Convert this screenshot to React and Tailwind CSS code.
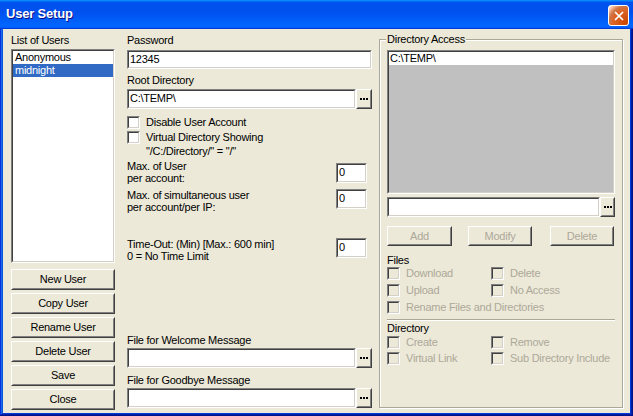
import React from 'react';
import { X } from 'lucide-react';

// Classic Win32 look: sunken field / raised button edges
const Sunken = ({ className = '', inner = 'bg-white', children }) => (
  <div className={`border border-t-[#808080] border-l-[#808080] border-r-white border-b-white ${className}`}>
    <div className={`w-full h-full overflow-hidden border border-t-[#404040] border-l-[#404040] border-r-[#D4D0C8] border-b-[#D4D0C8] ${inner}`}>
      {children}
    </div>
  </div>
);

const Raised = ({ className = '', disabled, children }) => (
  <div className={`border border-t-white border-l-white border-r-[#404040] border-b-[#404040] bg-[#ECE9D8] ${className}`}>
    <div
      className={`w-full h-full border border-t-[#ECE9D8] border-l-[#ECE9D8] border-r-[#808080] border-b-[#808080] flex items-center justify-center ${
        disabled ? 'text-[#ACA899]' : 'text-black'
      }`}
    >
      {children}
    </div>
  </div>
);

const Browse = ({ className = 'w-[16px]' }) => (
  <Raised className={`h-full shrink-0 ${className}`}>
    <div className="flex gap-[1px]">
      <span className="w-[2px] h-[2px] bg-black" />
      <span className="w-[2px] h-[2px] bg-black" />
      <span className="w-[2px] h-[2px] bg-black" />
    </div>
  </Raised>
);

const Field = ({ value = '', className = '' }) => (
  <Sunken className={className}>
    <div className="pl-[1px] leading-[14px] whitespace-nowrap">{value}</div>
  </Sunken>
);

const Check = ({ label, disabled }) => (
  <div className="flex items-center">
    <Sunken className="w-[13px] h-[13px] shrink-0" inner={disabled ? 'bg-[#ECE9D8]' : 'bg-white'} />
    <span className={`ml-[6px] leading-[13px] whitespace-nowrap ${disabled ? 'text-[#ACA899]' : ''}`}>{label}</span>
  </div>
);

const userButtons = ['New User', 'Copy User', 'Rename User', 'Delete User', 'Save', 'Close'];

export default function App() {
  return (
    <div className="w-[633px] h-[416px] flex flex-col bg-[#0855DD] shadow-[inset_-1px_-1px_#00138c,inset_1px_1px_#0831d9,inset_-2px_-2px_#001ea0,inset_2px_2px_#166aee,inset_-3px_-3px_#003bda,inset_3px_3px_#0855dd] font-['Liberation_Sans',Arial,sans-serif] text-[11px] tracking-[-0.25px] text-black">
      {/* Title bar */}
      <div className="h-[29px] shrink-0 flex items-start pl-[6px] pr-[4px] bg-[linear-gradient(180deg,#0997ff,#0053ee_8%,#0050ee_40%,#06f_88%,#06f_93%,#005bff_95%,#003dd7_96%,#003dd7)]">
        <span className="mt-[5px] leading-[17px] text-[13px] font-bold tracking-[-0.2px] text-white font-['Liberation_Sans_Narrow','Liberation_Sans',Arial,sans-serif] [text-shadow:1px_1px_#0F1089]">
          User Setup
        </span>
        <button className="ml-auto mt-[5px] w-[21px] h-[21px] rounded-[3px] border border-white flex items-center justify-center bg-[radial-gradient(circle_at_90%_90%,#cc4600_0,#dc6527_55%,#cd7546_70%,#ffccb2_90%,#fff_100%)]">
          <X size={14} strokeWidth={3} color="#fff" />
        </button>
      </div>

      {/* Client area */}
      <div className="flex-1 mx-[3px] mb-[3px] bg-[#ECE9D8] flex">
        {/* Users column */}
        <div className="ml-[8px] w-[104px] flex flex-col pt-[4px] pb-[3px]">
          <div className="h-[14px] leading-[14px]">List of Users</div>
          <Sunken className="mt-[2px] flex-1 mb-[6px]">
            <div className="pl-[2px] leading-[13px]">Anonymous</div>
            <div className="pl-[2px] leading-[13px] bg-[#316AC5] text-white">midnight</div>
          </Sunken>
          <div className="flex flex-col gap-[3px]">
            {userButtons.map((label) => (
              <Raised key={label} className="h-[21px]">
                {label}
              </Raised>
            ))}
          </div>
        </div>

        {/* Account settings column */}
        <div className="ml-[12px] w-[245px] flex flex-col pt-[4px] pb-[5px]">
          <div className="h-[14px] leading-[14px]">Password</div>
          <Field className="mt-[3px] h-[19px]" value="12345" />
          <div className="mt-[4px] h-[14px] leading-[14px]">Root Directory</div>
          <div className="mt-[2px] h-[20px] flex">
            <Field className="flex-1" value="C:\TEMP\" />
            <Browse />
          </div>
          <div className="mt-[7px] flex flex-col gap-[2px]">
            <Check label="Disable User Account" />
            <Check label="Virtual Directory Showing" />
          </div>
          <div className="mt-[1px] pl-[19px] leading-[13px]">"/C:/Directory/" = "/"</div>

          <div className="mt-[2px] flex justify-between pr-[5px]">
            <div className="leading-[12px]">
              Max. of User
              <br />
              per account:
            </div>
            <Field className="mt-[3px] w-[31px] h-[20px]" value="0" />
          </div>
          <div className="mt-[5px] flex justify-between pr-[5px]">
            <div className="leading-[12px]">
              Max. of simultaneous user
              <br />
              per account/per IP:
            </div>
            <Field className="w-[31px] h-[20px]" value="0" />
          </div>
          <div className="mt-[25px] flex justify-between pr-[5px]">
            <div className="leading-[12px]">
              Time-Out: (Min) [Max.: 600 min]
              <br />0 = No Time Limit
            </div>
            <Field className="w-[31px] h-[20px]" value="0" />
          </div>

          <div className="mt-auto h-[14px] leading-[14px]">File for Welcome Message</div>
          <div className="mt-[1px] h-[20px] flex">
            <Field className="flex-1" />
            <Browse />
          </div>
          <div className="mt-[5px] h-[14px] leading-[14px]">File for Goodbye Message</div>
          <div className="mt-[1px] h-[20px] flex">
            <Field className="flex-1" />
            <Browse />
          </div>
        </div>

        {/* Directory Access group */}
        <div className="relative ml-[7px] mt-[10px] mb-[5px] w-[244px] border border-[#ACA899] shadow-[inset_1px_1px_0_#fff,1px_1px_0_#fff] px-[7px] pt-[10px] flex flex-col">
          <span className="absolute -top-[7px] left-[6px] px-[1px] bg-[#ECE9D8] leading-[13px]">Directory Access</span>
          <Sunken className="h-[144px]" inner="bg-[#C0C0C0]">
            <div className="bg-white pl-[1px] leading-[13px]">C:\TEMP\</div>
          </Sunken>
          <div className="mt-[3px] h-[20px] flex">
            <Field className="flex-1" />
            <Browse className="w-[15px]" />
          </div>
          <div className="mt-[9px] flex">
            <Raised disabled className="w-[65px] h-[20px]">Add</Raised>
            <Raised disabled className="ml-[16px] w-[64px] h-[20px]">Modify</Raised>
            <Raised disabled className="ml-[18px] w-[64px] h-[20px]">Delete</Raised>
          </div>

          <div className="mt-[8px] leading-[13px]">Files</div>
          <div className="grid grid-cols-[104px_1fr] gap-y-[4px]">
            <Check disabled label="Download" />
            <Check disabled label="Delete" />
            <Check disabled label="Upload" />
            <Check disabled label="No Access" />
            <div className="col-span-2">
              <Check disabled label="Rename Files and Directories" />
            </div>
          </div>
          <div className="mt-[5px] h-[2px] border-t border-t-[#ACA899] border-b border-b-white" />

          <div className="mt-[1px] leading-[13px]">Directory</div>
          <div className="mt-[1px] grid grid-cols-[104px_1fr] gap-y-[3px]">
            <Check disabled label="Create" />
            <Check disabled label="Remove" />
            <Check disabled label="Virtual Link" />
            <Check disabled label="Sub Directory Include" />
          </div>
        </div>
      </div>
    </div>
  );
}
